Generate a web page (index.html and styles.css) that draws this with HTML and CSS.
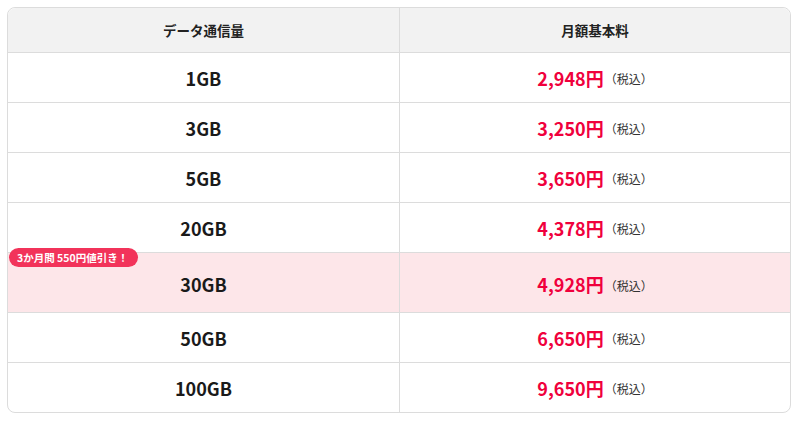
FILE: index.html
```html
<!DOCTYPE html>
<html lang="ja">
<head>
<meta charset="utf-8">
<link rel="stylesheet" href="styles.css">
</head>
<body>
<div class="table">
  <div class="row head">
    <div class="cell">データ通信量</div>
    <div class="cell">月額基本料</div>
  </div>
  <div class="row">
    <div class="cell gb">1GB</div>
    <div class="cell"><span class="price">2,948円</span><span class="tax">（税込）</span></div>
  </div>
  <div class="row">
    <div class="cell gb">3GB</div>
    <div class="cell"><span class="price">3,250円</span><span class="tax">（税込）</span></div>
  </div>
  <div class="row">
    <div class="cell gb">5GB</div>
    <div class="cell"><span class="price">3,650円</span><span class="tax">（税込）</span></div>
  </div>
  <div class="row">
    <div class="cell gb">20GB</div>
    <div class="cell"><span class="price">4,378円</span><span class="tax">（税込）</span></div>
  </div>
  <div class="row hl">
    <span class="badge">3か月間 550円値引き！</span>
    <div class="cell gb">30GB</div>
    <div class="cell"><span class="price">4,928円</span><span class="tax">（税込）</span></div>
  </div>
  <div class="row">
    <div class="cell gb">50GB</div>
    <div class="cell"><span class="price">6,650円</span><span class="tax">（税込）</span></div>
  </div>
  <div class="row">
    <div class="cell gb">100GB</div>
    <div class="cell"><span class="price">9,650円</span><span class="tax">（税込）</span></div>
  </div>
</div>
</body>
</html>
```
FILE: styles.css
```css
html, body {
  margin: 0;
  padding: 0;
  background: #fff;
}
body {
  padding: 7px 9px 0 7px;
  font-family: "Noto Sans CJK JP", "Noto Sans", sans-serif;
  color: #222;
}
.table {
  width: 782px;
  border: 1px solid #dcdcdc;
  border-radius: 8px;
}
.row {
  position: relative;
  display: grid;
  grid-template-columns: 392px 1fr;
  height: 49px;
  border-top: 1px solid #dcdcdc;
}
.row.head {
  border-top: none;
  height: 44px;
  background: #f2f2f2;
  border-radius: 8px 8px 0 0;
  font-size: 13.5px;
  font-weight: 700;
}
.cell {
  display: flex;
  align-items: center;
  justify-content: center;
}
.row .cell:nth-child(1),
.row.hl .cell:nth-child(2) {
  border-right: 1px solid #dcdcdc;
}
.row.hl .cell:nth-child(3) {
  border-right: none;
}
.gb {
  font-size: 18px;
  font-weight: 700;
  color: #1a1a1a;
}
.price {
  font-size: 18px;
  font-weight: 700;
  color: #f0003c;
}
.tax {
  font-size: 12px;
  color: #333;
  margin-left: 1px;
  padding-top: 2px;
}
.row.hl {
  height: 59px;
  background-color: #fde6e9;
  background-image: radial-gradient(rgba(200,160,170,0.25) 0.5px, transparent 0.6px);
  background-size: 6px 6px;
}
.row.hl .cell {
  padding-top: 3px;
}
.badge {
  position: absolute;
  left: 1px;
  top: -5px;
  height: 19px;
  line-height: 19px;
  padding: 0 10px 0 8px;
  border-radius: 10px;
  background: #f2335a;
  color: #fff;
  font-size: 10.5px;
  font-weight: 700;
  white-space: nowrap;
  z-index: 2;
}
```
